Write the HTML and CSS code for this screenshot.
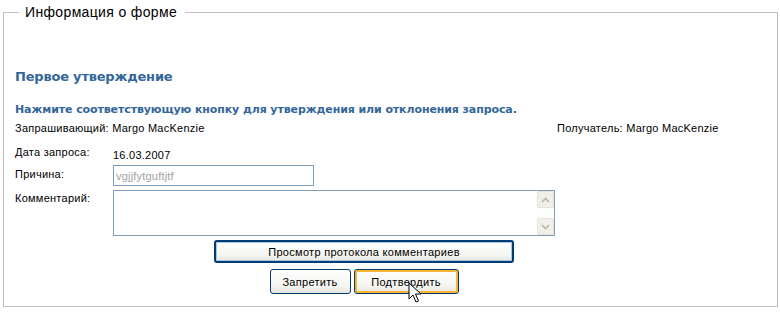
FILE: index.html
```html
<!DOCTYPE html>
<html lang="ru">
<head>
    <meta charset="UTF-8">
    <title>Информация о форме</title>
    <link rel="stylesheet" href="styles.css">
</head>
<body>
    <fieldset class="form-info">
        <legend>Информация о форме</legend>

        <h2 class="title">Первое утверждение</h2>
        <p class="hint">Нажмите соответствующую кнопку для утверждения или отклонения запроса.</p>

        <div class="people">
            <span>Запрашивающий: Margo MacKenzie</span>
            <span>Получатель: Margo MacKenzie</span>
        </div>

        <div class="row row-date">
            <label>Дата запроса:</label>
            <span class="value">16.03.2007</span>
        </div>
        <div class="row row-reason">
            <label>Причина:</label>
            <input class="reason" type="text" value="vgjjfytguftjtf" readonly>
        </div>
        <div class="row row-comment">
            <label>Комментарий:</label>
            <div class="comment">
                <div class="scroll">
                    <span class="arrow">
                        <svg width="9" height="6" viewBox="0 0 9 6"><path d="M1 5 L4.5 1.5 L8 5" fill="none" stroke="#b8b8a8" stroke-width="1.6"/></svg>
                    </span>
                    <span class="arrow">
                        <svg width="9" height="6" viewBox="0 0 9 6"><path d="M1 1 L4.5 4.5 L8 1" fill="none" stroke="#b8b8a8" stroke-width="1.6"/></svg>
                    </span>
                </div>
            </div>
        </div>

        <div class="actions">
            <button class="btn btn-wide">Просмотр протокола комментариев</button>
            <div class="pair">
                <button class="btn">Запретить</button>
                <button class="btn btn-hot">Подтвердить
                    <svg class="cursor" width="14" height="22" viewBox="0 0 14 22">
                        <path d="M1 1 L1 17 L5 13 L8 20 L10.5 19 L7.5 12 L13 12 Z" fill="#fff" stroke="#000" stroke-width="1"/>
                    </svg>
                </button>
            </div>
        </div>
    </fieldset>
</body>
</html>
```

FILE: styles.css
```css
* {
    margin: 0;
    box-sizing: border-box;
}

body {
    background: #fff;
    font-family: "Liberation Sans", Arial, sans-serif;
    font-size: 11px;
    letter-spacing: 0.25px;
    color: #000;
    padding: 4px 2px 0 3px;
}

.form-info {
    width: 775px;
    height: 303px;
    border: 1px solid #c0c0c0;
    border-right-color: #b8b8b0;
    padding: 0 0 0 11px;
    min-width: 0;
}

.form-info legend {
    font-size: 14px;
    letter-spacing: 0.35px;
    padding: 0 8px 0 6px;
    margin-left: 4px;
    color: #000;
    line-height: 16px;
}

.title {
    font-family: "DejaVu Sans", Verdana, sans-serif;
    font-size: 13px;
    letter-spacing: -0.2px;
    font-weight: bold;
    color: #336699;
    margin-top: 49px;
    line-height: 16px;
}

.hint {
    font-family: "DejaVu Sans", Verdana, sans-serif;
    font-size: 11px;
    letter-spacing: -0.1px;
    font-weight: bold;
    color: #336699;
    margin-top: 18px;
    line-height: 14px;
}

.people {
    display: grid;
    grid-template-columns: 542px 1fr;
    margin-top: 5px;
    line-height: 13px;
}

.row {
    display: grid;
    grid-template-columns: 98px 1fr;
    align-items: start;
}

.row label {
    line-height: 13px;
}

.row-date {
    margin-top: 11px;
}

.row-date .value {
    padding-top: 3px;
    line-height: 13px;
}

.row-reason {
    margin-top: 3px;
}

.row-reason label {
    padding-top: 3px;
}

.reason {
    width: 201px;
    height: 21px;
    border: 1px solid #7f9db9;
    font-family: "Liberation Sans", Arial, sans-serif;
    font-size: 11px;
    letter-spacing: 0.2px;
    color: #a0a0a0;
    padding: 0 2px;
    outline: none;
}

.row-comment {
    margin-top: 4px;
}

.row-comment label {
    padding-top: 2px;
}

.comment {
    width: 442px;
    height: 46px;
    border: 1px solid #7f9db9;
    display: flex;
    justify-content: flex-end;
}

.scroll {
    width: 17px;
    display: flex;
    flex-direction: column;
    justify-content: space-between;
    background: #fdfdfa;
}

.arrow {
    height: 17px;
    display: flex;
    align-items: center;
    justify-content: center;
    background: #f0efe8;
    border: 1px solid #e4e3dc;
    border-radius: 2px;
}

.actions {
    display: flex;
    flex-direction: column;
    align-items: center;
    margin-top: 4px;
    padding-right: 64px;
}

.btn {
    font-family: "Liberation Sans", Arial, sans-serif;
    font-size: 11px;
    letter-spacing: 0.3px;
    color: #000;
    height: 23px;
    padding: 0 10px;
    background: linear-gradient(#ffffff, #f4f4f0 70%, #e6e5de);
    border: 1px solid #003c74;
    border-radius: 3px;
}

.btn-wide {
    width: 300px;
    border-width: 2px;
    box-shadow: inset 0 0 0 1px #a8c4e6;
}

.pair {
    display: flex;
    gap: 3px;
    margin-top: 6px;
}

.pair .btn {
    height: 25px;
    width: 81px;
}

.pair .btn-hot {
    position: relative;
    width: 105px;
    box-shadow: inset 0 0 0 2px #f8b330;
}

.cursor {
    position: absolute;
    left: 53px;
    top: 12px;
}
```
